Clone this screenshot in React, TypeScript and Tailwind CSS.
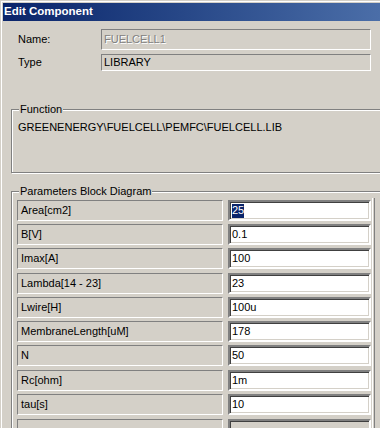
import React from "react";

const rows: { label: string; value: string; mt: string }[] = [
  { label: "Area[cm2]", value: "25", mt: "mt-0" },
  { label: "B[V]", value: "0.1", mt: "mt-[3px]" },
  { label: "Imax[A]", value: "100", mt: "mt-[3px]" },
  { label: "Lambda[14 - 23]", value: "23", mt: "mt-[4px]" },
  { label: "Lwire[H]", value: "100u", mt: "mt-[3px]" },
  { label: "MembraneLength[uM]", value: "178", mt: "mt-[3px]" },
  { label: "N", value: "50", mt: "mt-[3px]" },
  { label: "Rc[ohm]", value: "1m", mt: "mt-[4px]" },
  { label: "tau[s]", value: "10", mt: "mt-[3px]" },
  { label: "", value: "", mt: "mt-[4px]" },
];

export default function App() {
  return (
    <div className="w-[380px] h-[428px] overflow-hidden bg-[#d4d0c8] relative font-['Liberation_Sans',Arial,sans-serif] text-[11px] leading-none text-black shadow-[inset_1px_1px_0_#d4d0c8,inset_2px_2px_0_#fff] pt-[3px] pl-[3px]">
      {/* title bar */}
      <div className="h-[18px] bg-gradient-to-r from-[#0a246a] to-[#4b6ea8] text-white font-bold text-[11.5px] pl-[1px] flex items-center">
        Edit Component
      </div>

      {/* Name / Type */}
      <div className="mt-[8px] pl-[15px] pr-[9px] flex flex-col">
        <div className="flex items-center h-[21px]">
          <div className="w-[83px] text-black">Name:</div>
          <div className="flex-1 h-[21px] border border-[#808080] border-b-white border-r-white flex items-center pl-[2px] text-[#808080] [text-shadow:1px_1px_0_#fff]">
            FUELCELL1
          </div>
        </div>
        <div className="flex items-center h-[17px] mt-[4px]">
          <div className="w-[83px]">Type</div>
          <div className="flex-1 h-[17px] border border-[#808080] border-b-white border-r-white flex items-center pl-[2px]">
            LIBRARY
          </div>
        </div>
      </div>

      {/* Function group */}
      <div className="relative ml-[8px] mt-[38px] w-[420px] h-[64px] border border-[#808080] shadow-[inset_1px_1px_0_#fff,1px_1px_0_#fff]">
        <div className="absolute top-[-6px] left-[7px] px-[1px] bg-[#d4d0c8]">Function</div>
        <div className="pl-[6px] pt-[12px]">GREENENERGY\FUELCELL\PEMFC\FUELCELL.LIB</div>
      </div>

      {/* Parameters group */}
      <div className="relative ml-[8px] mt-[18px] w-[420px] h-[260px] border border-[#808080] shadow-[inset_1px_1px_0_#fff,1px_1px_0_#fff]">
        <div className="absolute top-[-6px] left-[7px] px-[1px] bg-[#d4d0c8]">Parameters Block Diagram</div>
        <div className="absolute left-[360px] top-[6px] bottom-0 w-[3px] border-l border-white border-r border-r-[#808080]" />
        <div className="pt-[8px] pl-[5px] flex flex-col w-[360px]">
          {rows.map((r, i) => (
            <div key={i} className={`flex h-[21px] ${r.mt}`}>
              <div className="w-[206px] h-[21px] border border-[#808080] border-b-white border-r-white flex items-center pl-[3px]">
                {r.label}
              </div>
              <div
                className={`ml-[5px] w-[143px] h-[21px] border-2 border-[#808080] border-b-white border-r-white shadow-[inset_1px_1px_0_#404040,inset_-1px_-1px_0_#d4d0c8] flex items-center pl-[2px] ${
                  r.label === "" ? "bg-[#d4d0c8]" : "bg-white"
                }`}
              >
                {i === 0 ? (
                  <span className="bg-[#0a246a] text-white h-[14px] flex items-center">{r.value}</span>
                ) : (
                  r.value
                )}
              </div>
            </div>
          ))}
        </div>
      </div>
    </div>
  );
}
